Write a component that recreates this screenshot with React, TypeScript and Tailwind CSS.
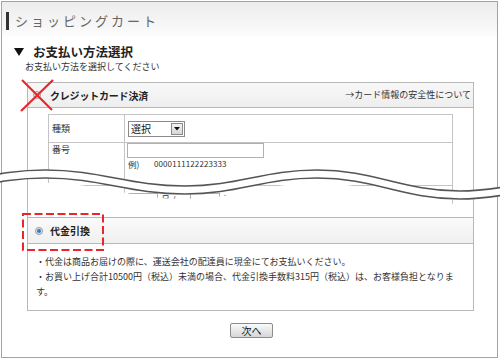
export default function App() {
  const center =
    "M -90 190 C -36 190, -9 174, 45 174 C 101 174, 129 190, 185 190 C 238 190, 264 174, 317 174 C 374 174, 403 195, 460 195 C 500 195, 520 185, 560 185";
  return (
    <div className="relative w-[500px] h-[360px] bg-white pl-px pt-px font-['Noto_Sans_CJK_JP',sans-serif] text-[#333]">
      <div className="w-[497px] h-[357px] border border-[#a3a3a3] flex flex-col">
        {/* header band */}
        <div className="h-[34px] shrink-0 bg-gradient-to-b from-[#ececec] to-[#fcfcfc] flex items-start pt-[10px] pl-[4px]">
          <div className="w-[3px] h-[18px] bg-[#333]" />
          <span className="ml-[6px] text-[13px] leading-[18px] tracking-[3px] text-[#666]">
            ショッピングカート
          </span>
        </div>

        {/* section title */}
        <div className="mt-[8px] h-[16px] flex items-center pl-[12px]">
          <svg width="10" height="8" viewBox="0 0 10 8">
            <polygon points="0,0 10,0 5,8" fill="#111" />
          </svg>
          <span className="ml-[9px] text-[12.5px] leading-[16px] font-bold text-[#222]">
            お支払い方法選択
          </span>
        </div>
        <div className="mt-[1px] pl-[23px] text-[9px] leading-[12px] text-[#333]">
          お支払い方法を選択してください
        </div>

        {/* credit card block */}
        <div className="mt-[9px] ml-[25px] w-[447px] border-x border-t border-[#b8b8b8]">
          <div className="h-[25px] border-b border-[#b8b8b8] bg-gradient-to-b from-[#f8f8f8] to-[#eeeeee] flex items-center pl-[5px] pr-[2px]">
            <div className="w-[8px] h-[8px] rounded-full border border-[#a0a0a0] bg-[#e4e4e4]" />
            <span className="ml-[9px] text-[10px] font-bold tracking-[-0.2px] text-[#222]">
              クレジットカード決済
            </span>
            <span className="ml-auto text-[9px] text-[#333]">→カード情報の安全性について</span>
          </div>
          <div className="h-[109px] pt-[6px] pl-[20px]">
            <div className="w-[405px] border-x border-t border-[#c4c4c4] text-[9px]">
              <div className="flex h-[28px] border-b border-[#c4c4c4]">
                <div className="w-[76px] border-r border-[#c4c4c4] flex items-center pl-[3px]">種類</div>
                <div className="flex items-center pl-[3px]">
                  <div className="w-[57px] h-[16px] border border-[#8a8a8a] bg-white flex items-center">
                    <span className="pl-[2px] text-[10px] leading-[12px] text-[#111]">選択</span>
                    <div className="ml-auto mr-[1px] w-[12px] h-[12px] border border-[#8a8a8a] bg-gradient-to-b from-[#f4f4f4] to-[#d6d6d6] flex items-center justify-center">
                      <svg width="6" height="4" viewBox="0 0 6 4">
                        <polygon points="0,0 6,0 3,3.5" fill="#111" />
                      </svg>
                    </div>
                  </div>
                </div>
              </div>
              <div className="flex h-[43px] border-b border-[#c4c4c4]">
                <div className="w-[76px] border-r border-[#c4c4c4] pl-[3px] pt-[1px] leading-[12px]">番号</div>
                <div className="pl-[2px] flex flex-col">
                  <div className="w-[137px] h-[15px] border border-[#b0b0b0] bg-white" />
                  <div className="flex items-center h-[10px] pl-[1px] mt-[1px]">
                    <span className="w-[26px] text-[8.5px] leading-[10px]">例)</span>
                    <span className="text-[8px] leading-[10px] tracking-[0.1px]">0000111122223333</span>
                  </div>
                </div>
              </div>
              <div className="flex h-[28px] border-b border-[#c4c4c4]">
                <div className="w-[76px] border-r border-[#c4c4c4] flex items-center pl-[3px]">有効期限</div>
                <div className="flex items-center pl-[3px]">
                  <div className="w-[30px] h-[13px] border border-[#b0b0b0]" />
                  <span className="ml-[3px]">月 /</span>
                  <div className="ml-[14px] w-[30px] h-[13px] border border-[#b0b0b0]" />
                  <span className="ml-[3px]">年</span>
                </div>
              </div>
            </div>
          </div>
        </div>

        {/* COD block */}
        <div className="ml-[25px] w-[447px] border border-[#b8b8b8]">
          <div className="h-[26px] border-b border-[#b8b8b8] bg-gradient-to-b from-[#fafafa] to-[#f0f0f0] flex items-center pl-[7px]">
            <div className="w-[8px] h-[8px] rounded-full border border-[#9a9a9a] bg-[#e6e6e6] flex items-center justify-center">
              <div className="w-[4px] h-[4px] rounded-full bg-[#2a7ad0]" />
            </div>
            <span className="ml-[7px] text-[10px] font-bold text-[#222]">代金引換</span>
          </div>
          <div className="h-[66px] pt-[10px] pl-[8px] text-[9px] leading-[15px] text-[#333] whitespace-nowrap">
            <div>・代金は商品お届けの際に、運送会社の配達員に現金にてお支払いください。</div>
            <div>・お買い上げ合計10500円（税込）未満の場合、代金引換手数料315円（税込）は、お客様負担となりま</div>
            <div>す。</div>
          </div>
        </div>

        {/* next button */}
        <div className="mt-[12px] ml-[228px]">
          <div className="w-[43px] h-[15px] border border-[#8c8c8c] rounded-[2px] bg-gradient-to-b from-[#fafafa] to-[#d6d6d6] text-[10px] leading-[13px] text-center text-[#111]">
            次へ
          </div>
        </div>
      </div>

      {/* overlay: wave break, cross, highlight */}
      <svg className="absolute left-0 top-0 pointer-events-none" width="500" height="360" viewBox="0 0 500 360">
        <defs>
          <clipPath id="inner">
            <rect x="28" y="0" width="445" height="360" />
          </clipPath>
        </defs>
        <g clipPath="url(#inner)">
          <path
            d="M -90 199 C -36 199, -9 183, 45 183 C 101 183, 129 199, 185 199 C 238 199, 264 183, 317 183 C 374 183, 403 204, 460 204 C 500 204, 520 194, 560 194 L 560 216 L -90 216 Z"
            fill="#fff"
          />
        </g>
        <path d={center} fill="none" stroke="#fff" strokeWidth="9" />
        <path d={center} transform="translate(0,-4)" fill="none" stroke="#555" strokeWidth="1.6" />
        <path d={center} transform="translate(0,4)" fill="none" stroke="#555" strokeWidth="1.6" />

        <line x1="22" y1="80" x2="52" y2="110" stroke="#e8262b" strokeWidth="2.2" />
        <line x1="53" y1="80" x2="21" y2="111" stroke="#e8262b" strokeWidth="2.2" />

        <rect x="23" y="214" width="80" height="36" fill="none" stroke="#e8262b" strokeWidth="2" strokeDasharray="8 3.5" />
      </svg>
    </div>
  );
}
